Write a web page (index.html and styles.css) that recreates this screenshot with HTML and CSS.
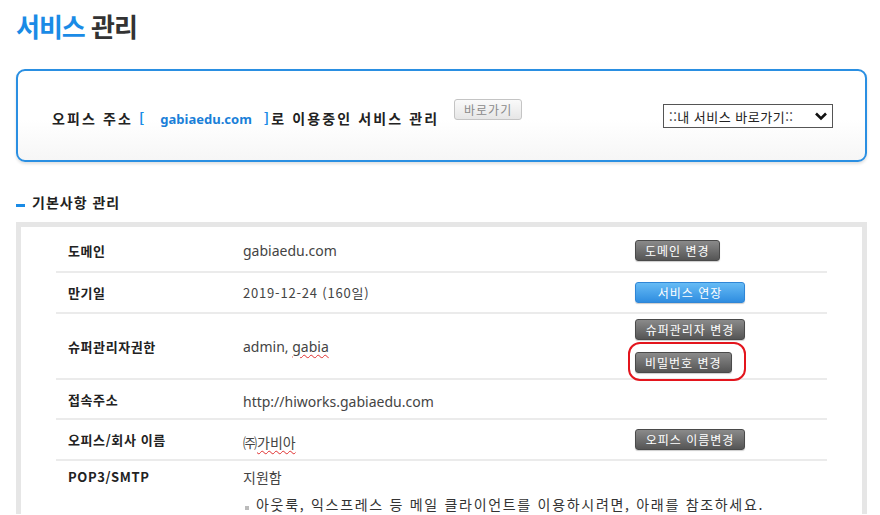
FILE: index.html
```html
<!DOCTYPE html>
<html lang="ko">
<head>
    <meta charset="UTF-8">
    <title>서비스 관리</title>
    <link rel="stylesheet" href="styles.css">
</head>
<body>
    <div class="page">
        <h1><span class="blue">서비스</span> 관리</h1>

        <div class="office-box">
            <div class="office-text">
                오피스 주소 <span class="bracket">[</span><span class="domain">gabiaedu.com</span><span class="bracket">]</span>로 이용중인 서비스 관리
            </div>
            <button class="go-btn">바로가기</button>
            <div class="select-box">
                <span>::내 서비스 바로가기::</span>
                <svg width="14" height="10" viewBox="0 0 14 10"><path d="M2 2.5 L7 7.5 L12 2.5" fill="none" stroke="#111" stroke-width="2.6"/></svg>
            </div>
        </div>

        <h2 class="sub-title">기본사항 관리</h2>
        <div class="panel">
            <div class="row r1">
                <div class="label">도메인</div>
                <div class="value">gabiaedu.com</div>
                <div class="actions"><button class="btn">도메인 변경</button></div>
            </div>
            <div class="row r2">
                <div class="label">만기일</div>
                <div class="value date">2019-12-24 (160일)</div>
                <div class="actions"><button class="btn blue-btn wide">서비스 연장</button></div>
            </div>
            <div class="row r3">
                <div class="label">슈퍼관리자권한</div>
                <div class="value">admin, <span class="spell">gabia</span></div>
                <div class="actions">
                    <button class="btn wide">슈퍼관리자 변경</button>
                    <div class="mark-wrap">
                        <button class="btn">비밀번호 변경</button>
                        <span class="mark"></span>
                    </div>
                </div>
            </div>
            <div class="row r4">
                <div class="label">접속주소</div>
                <div class="value low">http://hiworks.gabiaedu.com</div>
                <div class="actions"></div>
            </div>
            <div class="row r5">
                <div class="label">오피스/회사 이름</div>
                <div class="value low">㈜<span class="spell">가비아</span></div>
                <div class="actions"><button class="btn wide">오피스 이름변경</button></div>
            </div>
            <div class="row last">
                <div class="label">POP3/SMTP</div>
                <div class="value span">
                    <div>지원함</div>
                    <div class="note">아웃룩, 익스프레스 등 메일 클라이언트를 이용하시려면, 아래를 참조하세요.</div>
                </div>
            </div>
        </div>
    </div>
</body>
</html>
```

FILE: styles.css
```css
* { box-sizing: border-box; }
html { overflow: hidden; }
body {
    margin: 0;
    background: #fff;
    font-family: 'Noto Sans', 'Noto Sans CJK KR', sans-serif;
    color: #333;
}
.page {
    padding: 0 13px 0 16px;
}
h1 {
    margin: 10px 0 0 0;
    font-family: 'Noto Sans CJK KR', sans-serif;
    font-size: 26px;
    line-height: 32px;
    font-weight: 700;
    letter-spacing: -1px;
    color: #333;
}
h1 .blue { color: #1a8be6; }

.office-box {
    margin-top: 27px;
    height: 93px;
    border: 2px solid #2a8fe2;
    border-radius: 9px;
    background: linear-gradient(#fff 55%, #f6f6f6);
    box-shadow: 0 2px 3px rgba(0, 0, 0, 0.12);
    display: flex;
    align-items: center;
    padding: 0 32px 0 34px;
}
.office-text {
    font-family: 'Noto Sans CJK KR', sans-serif;
    font-weight: 700;
    font-size: 14px;
    letter-spacing: 2.1px;
    color: #222;
    margin-top: 4px;
}
.office-text .bracket { color: #1a8be6; }
.office-text .domain {
    font-family: 'Noto Sans', sans-serif;
    color: #1a7fd8;
    font-size: 13px;
    letter-spacing: 0;
    margin: 0 12px 0 14px;
}
.go-btn {
    margin-left: 15px;
    margin-top: -12px;
    height: 21px;
    width: 68px;
    padding: 0;
    font-family: 'Noto Sans CJK KR', sans-serif;
    font-size: 12px;
    letter-spacing: 1px;
    color: #8a8a8a;
    background: linear-gradient(#fafafa, #e6e6e6);
    border: 1px solid #c4c4c4;
    border-radius: 3px;
}
.select-box {
    margin-left: auto;
    margin-top: 1px;
    width: 170px;
    height: 24px;
    border: 1px solid #555;
    background: #fff;
    display: flex;
    align-items: center;
    justify-content: space-between;
    padding: 0 4px 0 5px;
    font-family: 'Noto Sans CJK KR', sans-serif;
    font-size: 13px;
    color: #222;
    letter-spacing: 0.5px;
}

.sub-title {
    margin: 30px 0 10px 0;
    height: 20px;
    line-height: 20px;
    font-family: 'Noto Sans CJK KR', sans-serif;
    font-size: 14px;
    font-weight: 700;
    letter-spacing: 1px;
    color: #222;
    display: flex;
    align-items: center;
}
.sub-title::before {
    content: "";
    width: 9px;
    height: 3px;
    background: #1a8be6;
    margin: 6px 7px 0 0;
}

.panel {
    border: 5px solid #e6e6e6;
    border-bottom: none;
    background: #fff;
    padding: 0 35px;
    width: 851px;
}
.row {
    display: grid;
    grid-template-columns: 187px 392px 1fr;
    align-items: center;
    border-bottom: 2px solid #ebebeb;
}
.r1 { height: 46px; padding-top: 2px; }
.r2 { height: 41px; }
.r3 { height: 66px; }
.r4 { height: 40px; }
.r5 { height: 41px; }
.last { border-bottom: none; align-items: start; padding-top: 6px; }

.label {
    padding-left: 12px;
    font-family: 'Noto Sans CJK KR', sans-serif;
    font-weight: 700;
    font-size: 13px;
    letter-spacing: 0.6px;
    color: #222;
}
.value {
    font-size: 14px;
    color: #444;
}
.value.span { grid-column: 2 / 4; }
.value.date {
    font-family: 'Noto Sans CJK KR', sans-serif;
    font-size: 13px;
    letter-spacing: 0.8px;
}
.value.low { padding-top: 5px; }
.spell {
    text-decoration: underline wavy #e03030;
    text-decoration-thickness: 1px;
    text-underline-offset: 2px;
}
.note {
    position: relative;
    margin-top: 7px;
    padding-left: 13px;
    font-family: 'Noto Sans CJK KR', sans-serif;
    letter-spacing: 1.7px;
    color: #333;
}
.note::before {
    content: "";
    position: absolute;
    left: 2px;
    top: 12px;
    width: 4px;
    height: 4px;
    background: #bbb;
}

.actions {
    display: flex;
    flex-direction: column;
    align-items: flex-start;
    gap: 11px;
}
.btn {
    height: 21px;
    padding: 0 9px;
    font-family: 'Noto Sans CJK KR', sans-serif;
    font-size: 12px;
    letter-spacing: 1px;
    color: #fff;
    background: linear-gradient(#8a8a8a, #555);
    border: 1px solid #4a4a4a;
    border-radius: 3px;
    box-shadow: 0 1px 1px rgba(0, 0, 0, 0.2);
}
.btn.wide { width: 110px; padding: 0; }
.btn.blue-btn {
    background: linear-gradient(#66bbf5, #2f8de0);
    border-color: #2f86d6;
}
.mark-wrap { position: relative; }
.mark {
    position: absolute;
    left: -7px;
    top: -9px;
    width: 118px;
    height: 39px;
    border: 2px solid #e3151d;
    border-radius: 12px;
    pointer-events: none;
}
```
